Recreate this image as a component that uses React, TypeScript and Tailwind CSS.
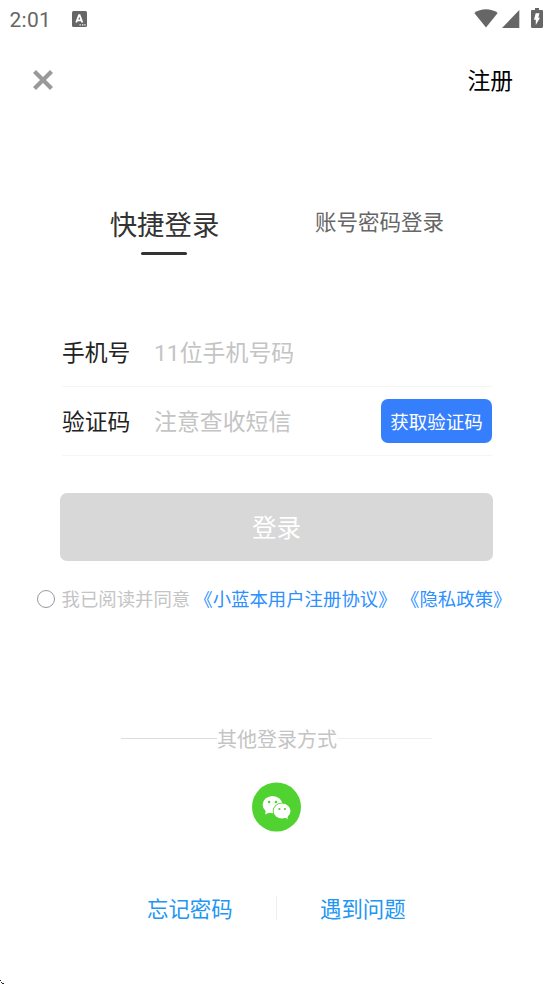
import type { ReactNode } from "react";

function StatusBar() {
    return (
        <div className="flex h-10 items-center pl-[9.5px] pr-[10px] text-[#666666]">
            <span className="text-[21px] leading-[38px] tracking-[0.3px]">2:01</span>
            <svg className="ml-[21px] mb-[3px]" width="15" height="16" viewBox="0 0 15 16">
                <rect width="15" height="16" rx="1.5" fill="#666666" />
                <path d="M4.2 11.5L7 4.2h.6l2.8 7.3M5.3 9.4h4" fill="none" stroke="white" strokeWidth="1.8" />
                <path d="M7.5 13.8h1.3M10 13.8h1.3M12.3 13.8h1.3" stroke="white" strokeWidth="1.2" />
            </svg>
            <div className="mb-[3px] ml-auto flex items-center">
                <svg width="24" height="19" viewBox="0 0 24 19" fill="#666666">
                    <path d="M0.3 4C7 -1 17 -1 23.7 4L12 18.5Z" />
                </svg>
                <svg className="ml-1" width="18" height="18" viewBox="0 0 18 18" fill="#666666">
                    <path d="M17.3 0V18H0Z" />
                </svg>
                <svg className="ml-[11px] -mt-px" width="12" height="20" viewBox="0 0 12 20">
                    <path d="M4 0h4v2h2.8c.7 0 1.2.5 1.2 1.2v15.6c0 .7-.5 1.2-1.2 1.2H1.2C.5 20 0 19.5 0 18.8V3.2C0 2.5.5 2 1.2 2H4z" fill="#666666" />
                    <path d="M4.7 5.3h3.8L7.3 9.7H9L4.8 17V11.8H3z" fill="white" />
                </svg>
            </div>
        </div>
    );
}

function WechatIcon() {
    return (
        <svg width="49" height="50" viewBox="0.5 0 49 50">
            <circle cx="25" cy="25" r="24.5" fill="#50d230" />
            <path d="M14.3 27.8L13.7 32.6L18.5 30.2Z" fill="white" />
            <ellipse cx="21" cy="22.6" rx="9.9" ry="8.7" fill="white" />
            <ellipse cx="30.5" cy="29" rx="9.3" ry="8.3" fill="#50d230" />
            <ellipse cx="30.5" cy="29" rx="8.5" ry="7.4" fill="white" />
            <path d="M33 35L36.3 37.2L35.7 32.5Z" fill="white" />
            <circle cx="17.6" cy="20" r="1.3" fill="#50d230" />
            <circle cx="24.5" cy="20" r="1.3" fill="#50d230" />
            <circle cx="27.9" cy="27" r="1.1" fill="#50d230" />
            <circle cx="33.4" cy="27" r="1.1" fill="#50d230" />
        </svg>
    );
}

interface FieldRowProps {
    label: string;
    placeholder: string;
    children?: ReactNode;
}

function FieldRow({ label, placeholder, children }: FieldRowProps) {
    return (
        <div className="flex h-[69px] items-center border-b border-[#f5f5f5]">
            <label className="w-[92px] shrink-0 pt-1 text-[22.8px] text-[#222222]">{label}</label>
            <input
                className="min-w-0 flex-1 bg-transparent pt-1 text-[22.9px] outline-none placeholder:text-[#c4c4c4]"
                placeholder={placeholder}
            />
            {children}
        </div>
    );
}

export default function App() {
    return (
        <div className="relative h-[984px] w-[553px] overflow-hidden bg-white font-[Roboto,'Noto_Sans_CJK_SC',sans-serif]">
            <StatusBar />

            {/* Close and register */}
            <header className="flex h-20 items-center justify-between pl-[33px] pr-10">
                <svg width="20" height="20" viewBox="0 0 20 20">
                    <path d="M1.5 1.5L18.5 18.5M18.5 1.5L1.5 18.5" stroke="#999999" strokeWidth="4.2" />
                </svg>
                <button className="pt-[5px] text-[22.8px] text-black">注册</button>
            </header>

            {/* Login tabs */}
            <div className="mt-[80px] grid h-[55px] grid-cols-2 pl-[57px] pr-[66px]">
                <button className="flex flex-col items-center text-[27.4px] text-[#333333]">
                    <span className="h-[52px] leading-[52px]">快捷登录</span>
                    <span className="mr-0.5 h-[3px] w-[46px] rounded-full bg-[#333333]" />
                </button>
                <button className="h-[46px] text-[21.5px] leading-[46px] text-[#666666]">账号密码登录</button>
            </div>

            <div className="ml-[62px] mr-[61px] mt-[63px]">
                <FieldRow label="手机号" placeholder="11位手机号码" />
                <FieldRow label="验证码" placeholder="注意查收短信">
                    <button className="h-11 w-[111px] shrink-0 rounded-[7px] bg-[#367ffc] pt-1.5 text-[18.5px] text-white">
                        获取验证码
                    </button>
                </FieldRow>
            </div>

            <button className="ml-[60px] mt-[37px] block h-[68px] w-[433px] rounded-[7px] bg-[#d8d8d8] pt-[5px] text-[24.5px] text-white">
                登录
            </button>

            {/* Agreement */}
            <div className="mt-[23px] flex h-[30px] items-center whitespace-nowrap pl-[37px] text-[18.4px]">
                <span className="h-[18px] w-[18px] shrink-0 rounded-full border-[1.5px] border-[#999999]" />
                <span className="ml-[6.5px] pt-0.5 text-[#c4c4c4]">我已阅读并同意</span>
                <a className="ml-[4px] pt-0.5 text-[#2c90ff]">《小蓝本用户注册协议》</a>
                <a className="ml-[4.5px] pt-0.5 text-[#2c90ff]">《隐私政策》</a>
            </div>

            <div className="mt-[110px] flex h-[30px] items-center pl-[121px] text-[20px] text-[#c4c4c4]">
                <span className="mb-px h-px w-[96px] bg-[#dddddd]" />
                <span className="pt-0.5">其他登录方式</span>
                <span className="mb-px h-px w-[95px] bg-[#eeeeee]" />
            </div>

            <div className="mt-[28px] flex justify-center">
                <WechatIcon />
            </div>

            <div className="mt-[62px] flex h-[28px] items-center text-[21.4px] text-[#2196f3]">
                <a className="w-[276px] pl-[147px] pt-[5px]">忘记密码</a>
                <span className="h-6 w-px bg-[#eeeeee]" />
                <a className="pl-[43px] pt-[5px]">遇到问题</a>
            </div>

            {/* Pointer tip at the screen corner */}
            <svg className="absolute bottom-0 left-0" width="4" height="4" viewBox="0 0 4 4" shapeRendering="crispEdges">
                <path d="M0 0h1v1H0zM1 2h1v1H1zM2 3h2v1H2z" fill="#222222" />
            </svg>
        </div>
    );
}
